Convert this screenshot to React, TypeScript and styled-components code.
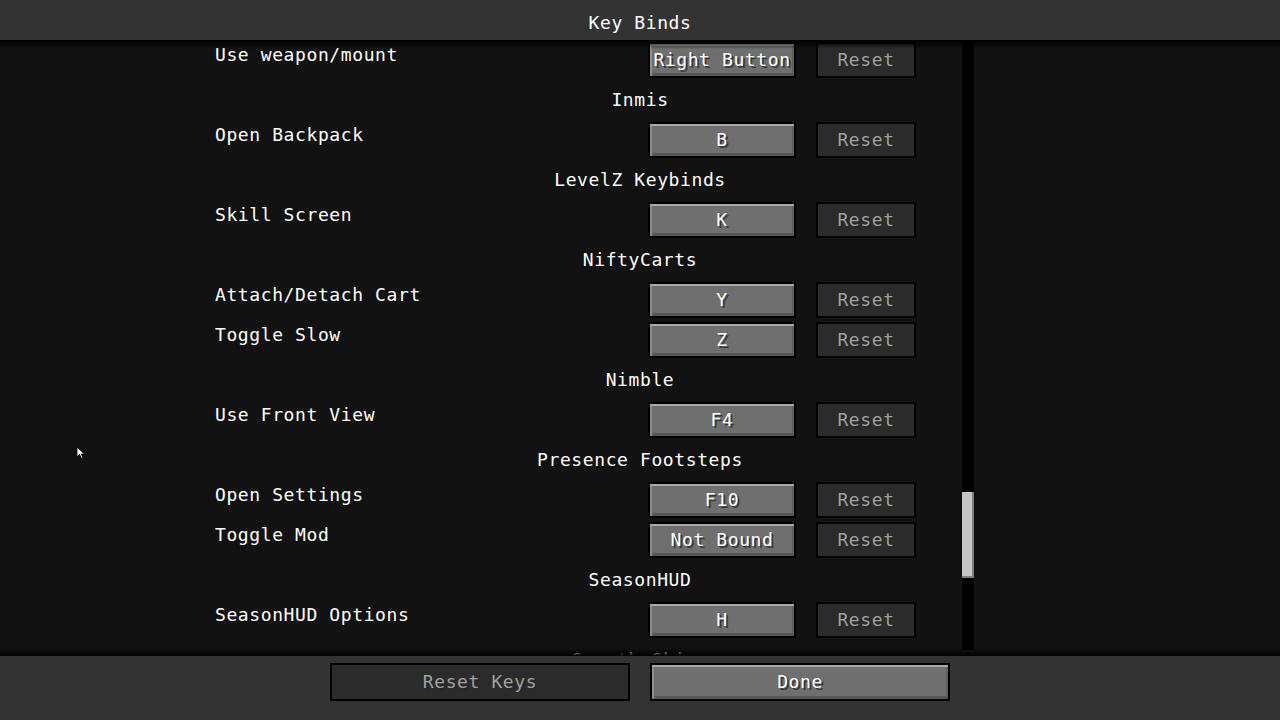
import React from 'react';
import styled, { createGlobalStyle } from 'styled-components';

const GlobalStyle = createGlobalStyle`
  html, body {
    margin: 0;
    padding: 0;
    background: #121212;
    overflow: hidden;
  }
  * {
    box-sizing: border-box;
  }
`;

const Screen = styled.div`
  position: relative;
  width: 1280px;
  height: 720px;
  display: flex;
  flex-direction: column;
  font-family: 'DejaVu Sans Mono', 'Liberation Mono', monospace;
  font-size: 18px;
  line-height: 18px;
  letter-spacing: 0.6px;
  color: #ffffff;
`;

const Header = styled.div`
  height: 40px;
  flex-shrink: 0;
  background: #333333;
  padding-top: 14px;
  text-align: center;
`;

const ListPanel = styled.div`
  position: relative;
  flex: 1;
  overflow: hidden;
  background: #121212;

  &::before,
  &::after {
    content: '';
    position: absolute;
    left: 0;
    right: 0;
    z-index: 2;
    pointer-events: none;
  }
  &::before {
    top: 0;
    height: 9px;
    background: linear-gradient(#000000, rgba(0, 0, 0, 0));
  }
  &::after {
    bottom: 0;
    height: 8px;
    background: linear-gradient(rgba(0, 0, 0, 0), #000000);
  }
`;

const Entries = styled.div`
  display: flex;
  flex-direction: column;
`;

const KeyRow = styled.div`
  height: 40px;
  padding-left: 215px;
  display: grid;
  grid-template-columns: 413px 148px 100px;
  column-gap: 20px;
  align-items: start;
`;

const Label = styled.div`
  margin-top: 6px;
  white-space: nowrap;
`;

const CategoryRow = styled.div`
  height: 40px;
  padding-top: 11px;
  text-align: center;
  white-space: nowrap;
`;

const McButton = styled.div<{ $disabled?: boolean }>`
  margin-top: 2px;
  height: 36px;
  display: flex;
  align-items: center;
  justify-content: center;
  padding-bottom: 1px;
  border: 2px solid #000000;
  white-space: nowrap;
  background: ${(p) => (p.$disabled ? '#2b2b2b' : '#6f6f6f')};
  color: ${(p) => (p.$disabled ? '#a0a0a0' : '#ffffff')};
  text-shadow: ${(p) => (p.$disabled ? '2px 2px 0 #262626' : '2px 2px 0 #3a3a3a')};
  box-shadow: ${(p) =>
    p.$disabled
      ? 'none'
      : 'inset 0 2px 0 #a9a9a9, inset 2px 0 0 #8e8e8e, inset 0 -3px 0 #575757, inset -2px 0 0 #5f5f5f'};
`;

const ScrollTrack = styled.div`
  position: absolute;
  top: 0;
  bottom: 6px;
  left: 962px;
  width: 12px;
  background: #000000;
  z-index: 1;
`;

const ScrollThumb = styled.div<{ $top: number; $size: number }>`
  margin-top: ${(p) => p.$top}px;
  height: ${(p) => p.$size}px;
  background: #c6c6c6;
  box-shadow: inset -2px -2px 0 #808080;
`;

const Footer = styled.div`
  height: 64px;
  flex-shrink: 0;
  background: #333333;
  padding-top: 7px;
  display: flex;
  justify-content: center;
  gap: 20px;
`;

const FooterButton = styled(McButton)`
  margin-top: 0;
  width: 300px;
  height: 38px;
`;

const Cursor = styled.svg`
  position: absolute;
  left: 76px;
  top: 446px;
`;

type Entry =
  | { kind: 'category'; title: string }
  | { kind: 'key'; label: string; key: string };

const entries: Entry[] = [
  { kind: 'key', label: 'Use weapon/mount', key: 'Right Button' },
  { kind: 'category', title: 'Inmis' },
  { kind: 'key', label: 'Open Backpack', key: 'B' },
  { kind: 'category', title: 'LevelZ Keybinds' },
  { kind: 'key', label: 'Skill Screen', key: 'K' },
  { kind: 'category', title: 'NiftyCarts' },
  { kind: 'key', label: 'Attach/Detach Cart', key: 'Y' },
  { kind: 'key', label: 'Toggle Slow', key: 'Z' },
  { kind: 'category', title: 'Nimble' },
  { kind: 'key', label: 'Use Front View', key: 'F4' },
  { kind: 'category', title: 'Presence Footsteps' },
  { kind: 'key', label: 'Open Settings', key: 'F10' },
  { kind: 'key', label: 'Toggle Mod', key: 'Not Bound' },
  { kind: 'category', title: 'SeasonHUD' },
  { kind: 'key', label: 'SeasonHUD Options', key: 'H' },
  { kind: 'category', title: 'Smooth Skies' },
];

export default function App() {
  return (
    <>
      <GlobalStyle />
      <Screen>
        <Header>Key Binds</Header>
        <ListPanel>
          <Entries>
            {entries.map((entry, i) =>
              entry.kind === 'category' ? (
                <CategoryRow key={i}>{entry.title}</CategoryRow>
              ) : (
                <KeyRow key={i}>
                  <Label>{entry.label}</Label>
                  <McButton>{entry.key}</McButton>
                  <McButton $disabled>Reset</McButton>
                </KeyRow>
              ),
            )}
          </Entries>
          <ScrollTrack>
            <ScrollThumb $top={452} $size={86} />
          </ScrollTrack>
        </ListPanel>
        <Footer>
          <FooterButton $disabled>Reset Keys</FooterButton>
          <FooterButton>Done</FooterButton>
        </Footer>
        <Cursor width="10" height="14" viewBox="0 0 10 14">
          <polygon points="1,1 1,11 3.5,8.5 5.5,12.5 7,11.8 5.2,8 8.5,8" fill="#ffffff" stroke="#000000" strokeWidth="0.8" />
        </Cursor>
      </Screen>
    </>
  );
}
